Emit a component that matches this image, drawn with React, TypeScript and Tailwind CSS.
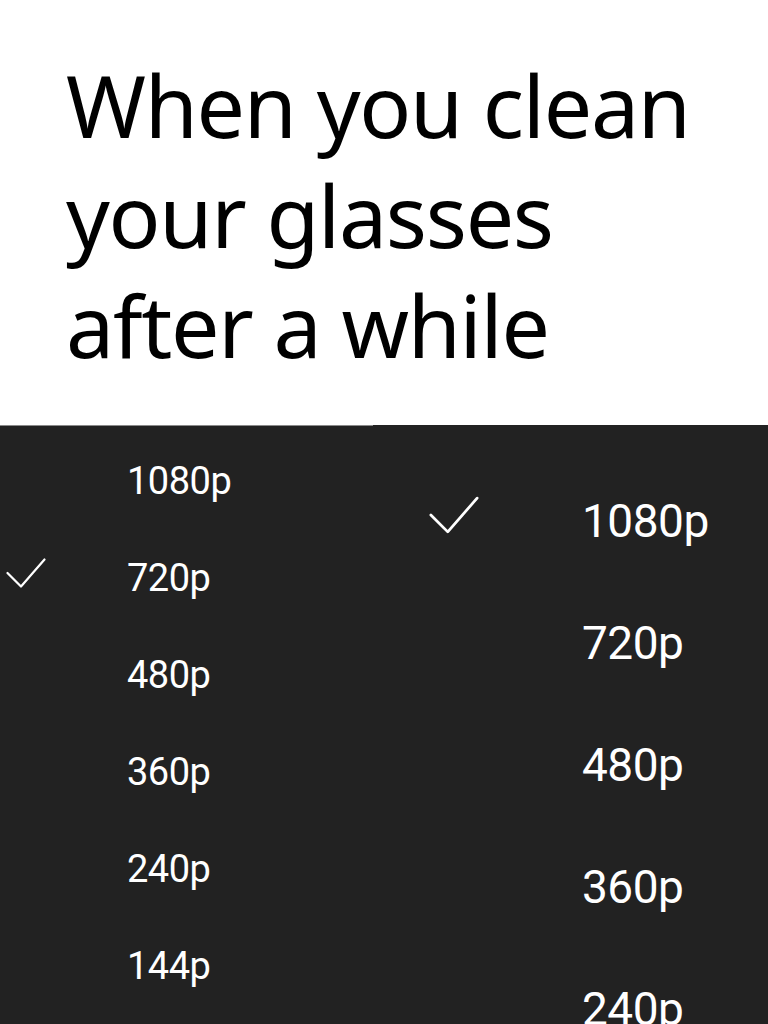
import React from "react";

function Check({ className }: { className?: string }) {
  return (
    <svg viewBox="0 0 40 30" className={className} fill="none" stroke="white" strokeWidth={2.2} strokeLinecap="round" strokeLinejoin="round">
      <path d="M1.5 15 L15 28.5 L38.5 1.5" />
    </svg>
  );
}

const leftItems = ["1080p", "720p", "480p", "360p", "240p", "144p"];
const rightItems = ["1080p", "720p", "480p", "360p", "240p"];

export default function App() {
  return (
    <div className="w-[768px] h-[1024px] overflow-hidden bg-white flex flex-col" style={{ fontFamily: "'Noto Sans', sans-serif" }}>
      <div className="h-[425px] shrink-0 pl-[66px] pt-[50px]">
        <h1 className="text-[86px] leading-[110px] text-black font-normal tracking-[-1.3px]">
          When you clean<br />your glasses<br />after a while
        </h1>
      </div>
      <div className="flex flex-1 bg-[#222222]" style={{ fontFamily: "Roboto, sans-serif" }}>
        <div className="w-[373px] border-t border-[#8a8a8a] pt-[6px]">
          {leftItems.map((t) => (
            <div key={t} className="h-[97px] relative flex items-center">
              {t === "720p" && <Check className="absolute left-[6px] top-[29px] w-[40px] h-[30px]" />}
              <span className="ml-[127px] text-[38px] text-white leading-none tracking-[-0.5px]">{t}</span>
            </div>
          ))}
        </div>
        <div className="flex-1 pt-[35px]">
          {rightItems.map((t) => (
            <div key={t} className="h-[122px] relative flex items-center">
              {t === "1080p" && <Check className="absolute left-[56px] top-[36px] w-[50px] h-[38px]" />}
              <span className="ml-[209px] text-[46px] text-white leading-none tracking-[-0.5px]">{t}</span>
            </div>
          ))}
        </div>
      </div>
    </div>
  );
}
